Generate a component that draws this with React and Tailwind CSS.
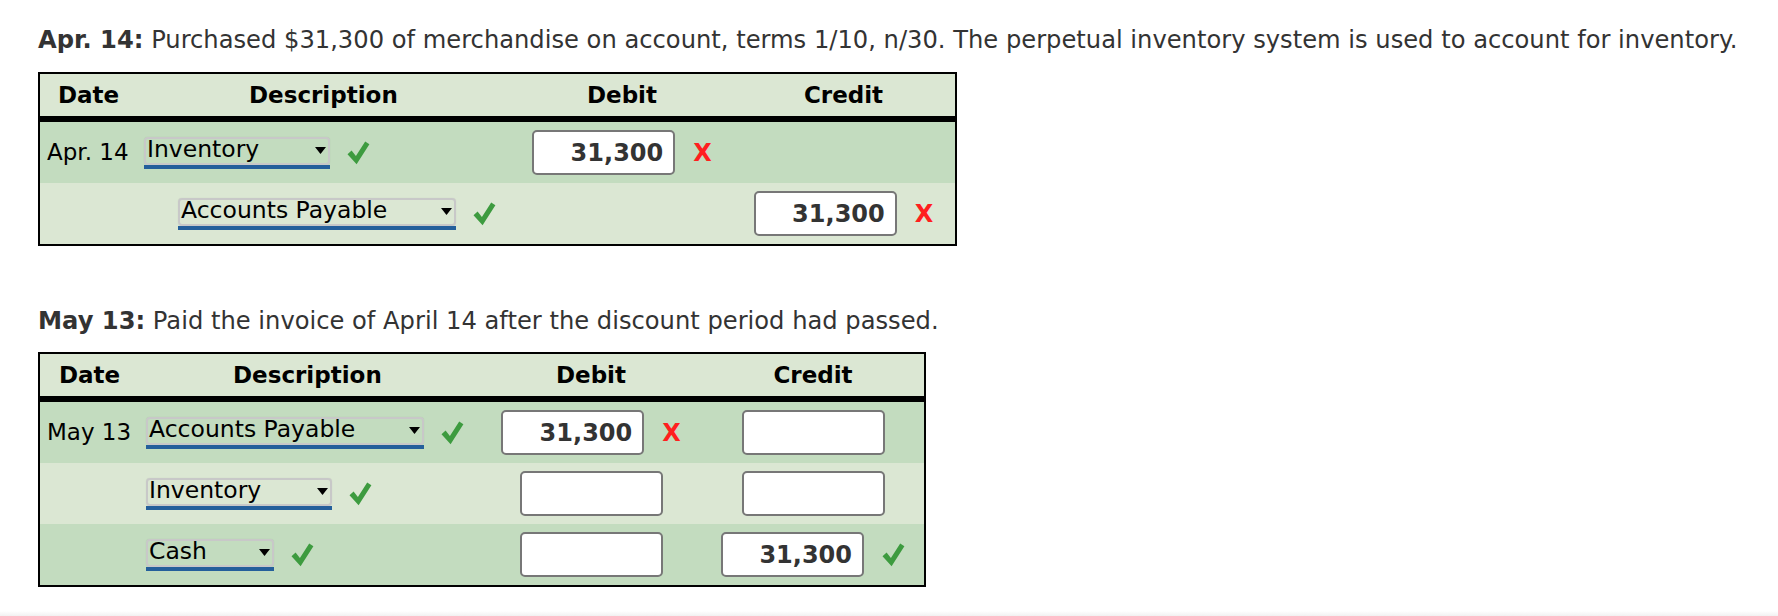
const font = "font-['DejaVu_Sans',Verdana,sans-serif]";

function Check() {
  return (
    <svg width="23" height="24" viewBox="0 0 23 24" className="shrink-0">
      <path d="M0.5 13.2 L4.6 9.6 L8.9 15 L18.2 0.5 L22.4 3.3 L9.6 23.2 Z" fill="#3d9b3f" />
    </svg>
  );
}

function Cross() {
  return <span className="text-[24px] leading-none font-bold text-[#ff1f1f] shrink-0">X</span>;
}

function Select({ label, width }) {
  return (
    <div className={`flex flex-col shrink-0 ${width}`}>
      <div className="h-[28px] border-2 border-[#c8c8c8] rounded-[4px] flex items-center justify-between pl-[1px] pr-[2px] text-[23.5px] leading-none text-black shadow-[0_0_1px_rgba(0,0,0,0.15)]">
        <span className="-mt-[2px]">{label}</span>
        <svg width="11" height="7" viewBox="0 0 11 7">
          <polygon points="0,0 11,0 5.5,7" fill="#000" />
        </svg>
      </div>
      <div className="h-[4px] bg-[#245f9b]" />
    </div>
  );
}

function Amount({ value }) {
  return (
    <div className="w-[143px] h-[45px] shrink-0 border-2 border-[#777] rounded-[5px] bg-white flex items-center justify-end pr-[10px] font-bold text-[24px] text-[#333] leading-none">
      {value}
    </div>
  );
}

function Header({ cols }) {
  return (
    <>
      <div className="flex h-[42px] bg-[#dbe7d3] font-bold text-[23px] text-black items-center">
        <div className={`${cols.date} ${cols.datePad}`}>Date</div>
        <div className={`${cols.desc} ${cols.descPad}`}>Description</div>
        <div className={`${cols.debit} text-center`}>Debit</div>
        <div className="flex-1 text-center">Credit</div>
      </div>
      <div className="h-[6px] bg-black" />
    </>
  );
}

function Row({ cols, shade, date, account, indent, accountWidth, debit, credit }) {
  return (
    <div className={`flex h-[61px] items-center ${shade ? 'bg-[#c3dcbf]' : 'bg-[#dbe7d3]'}`}>
      <div className={`${cols.date} pl-[7px] text-[23px] text-black`}>{date}</div>
      <div className={`${cols.desc} ${indent ? 'pl-[41px]' : 'pl-[7px]'} flex items-center gap-[17px]`}>
        <Select label={account} width={accountWidth} />
        <Check />
      </div>
      <div className={`${cols.debit} flex items-center justify-center gap-[18px]`}>{debit}</div>
      <div className="flex-1 flex items-center justify-center gap-[18px]">{credit}</div>
    </div>
  );
}

const cols1 = { date: 'w-[97px]', datePad: 'pl-[18px]', desc: 'w-[375px]', descPad: 'pl-[112px]', debit: 'w-[220px]' };
const cols2 = { date: 'w-[99px]', datePad: 'pl-[19px]', desc: 'w-[341px]', descPad: 'pl-[94px]', debit: 'w-[222px]' };

export default function App() {
  return (
    <div className={`${font} bg-white h-[616px] flex flex-col pl-[38px] pt-[26px]`}>
      <p className="text-[24.2px] leading-[28px] text-[#333] whitespace-nowrap">
        <b>Apr. 14:</b> Purchased $31,300 of merchandise on account, terms 1/10, n/30. The perpetual inventory system is used to account for inventory.
      </p>

      <div className="mt-[18px] w-[919px] border-2 border-black">
        <Header cols={cols1} />
        <Row cols={cols1} shade date="Apr. 14" account="Inventory" accountWidth="w-[186px]"
          debit={<><Amount value="31,300" /><Cross /></>} credit={null} />
        <Row cols={cols1} account="Accounts Payable" indent accountWidth="w-[278px]"
          debit={null} credit={<><Amount value="31,300" /><Cross /></>} />
      </div>

      <p className="mt-[61px] text-[24.2px] leading-[28px] text-[#333] whitespace-nowrap">
        <b>May 13:</b> Paid the invoice of April 14 after the discount period had passed.
      </p>

      <div className="mt-[17px] w-[888px] border-2 border-black">
        <Header cols={cols2} />
        <Row cols={cols2} shade date="May 13" account="Accounts Payable" accountWidth="w-[278px]"
          debit={<><Amount value="31,300" /><Cross /></>} credit={<Amount value="" />} />
        <Row cols={cols2} account="Inventory" accountWidth="w-[186px]"
          debit={<Amount value="" />} credit={<Amount value="" />} />
        <Row cols={cols2} shade account="Cash" accountWidth="w-[128px]"
          debit={<Amount value="" />} credit={<><Amount value="31,300" /><Check /></>} />
      </div>

      <div className="mt-auto -ml-[38px] h-[5px] bg-gradient-to-b from-white to-[#f1f1f1]" />
    </div>
  );
}
